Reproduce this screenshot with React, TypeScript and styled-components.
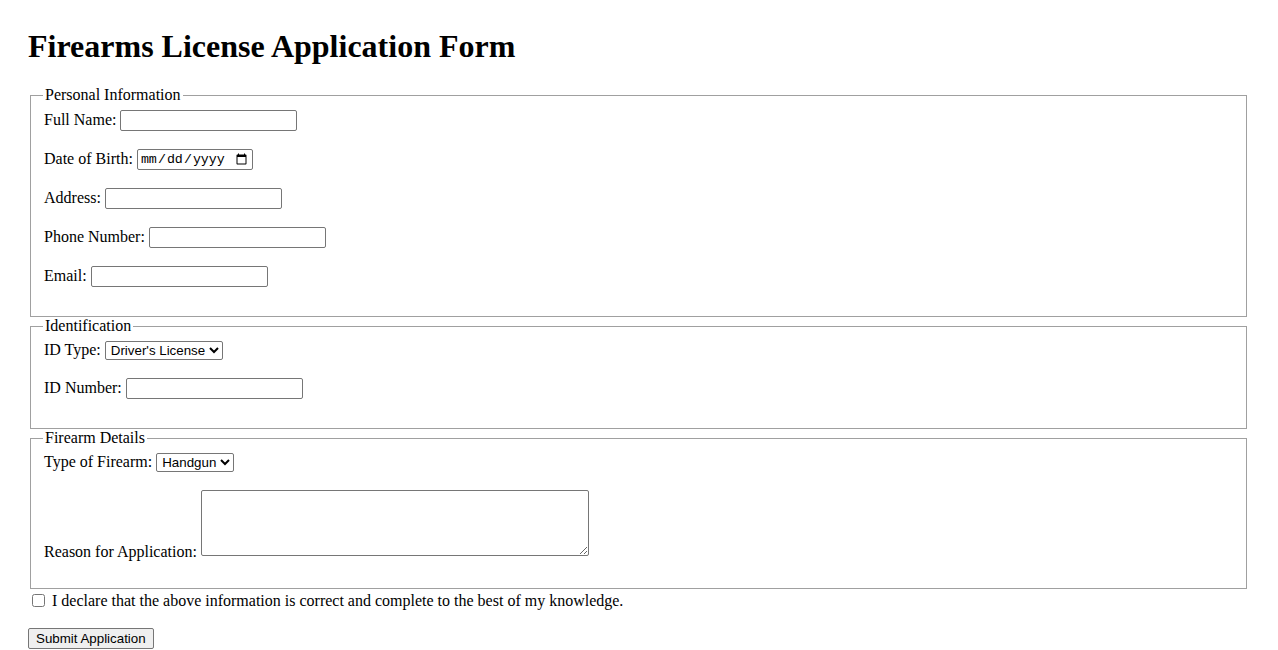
import React from "react";
import styled, { createGlobalStyle } from "styled-components";

const GlobalStyle = createGlobalStyle`
  html {
    overflow: hidden;
  }
  body {
    margin: 0;
    padding: 28px 29px 0 28px;
    background: #ffffff;
    color: #000000;
    font-family: "Liberation Serif", "Times New Roman", serif;
    font-size: 16px;
  }
`;

const Title = styled.h1`
  margin: 0 0 21px;
  font-size: 32px;
  font-weight: bold;
  line-height: 37px;
`;

const Form = styled.form`
  display: block;
`;

const Group = styled.fieldset`
  margin: 0 2px;
  padding: 5px 12px 11px;
  border: 1px solid #a0a0a0;

  &:first-of-type {
    padding-top: 6px;
  }
`;

const Legend = styled.legend`
  padding: 0 2px;
  line-height: 18px;
`;

const Row = styled.div<{ $bottom?: boolean }>`
  display: flex;
  align-items: ${(p) => (p.$bottom ? "flex-end" : "center")};
  gap: 4px;
  min-height: 20px;
  margin: 0 0 18px 1px;
  line-height: 18px;
`;

const FieldLabel = styled.label<{ $shift?: number }>`
  white-space: nowrap;
  padding-bottom: ${(p) => Math.max(p.$shift ?? 2, 0)}px;
  margin-bottom: ${(p) => Math.min(p.$shift ?? 2, 0)}px;
`;

const TextInput = styled.input`
  box-sizing: border-box;
  width: 177px;
  height: 21px;
  padding: 1px 2px;
  border: 1px solid #767676;
  border-radius: 2px;
  font: 13.33px "Liberation Sans", Arial, sans-serif;
`;

const DateInput = styled.input`
  box-sizing: border-box;
  width: 116px;
  height: 21px;
  padding: 1px 2px;
  border: 1px solid #767676;
  border-radius: 2px;
  font: 13.33px "Liberation Mono", "Courier New", monospace;
`;

const Select = styled.select`
  box-sizing: border-box;
  height: 19px;
  padding: 0 0 0 1px;
  border: 1px solid #767676;
  border-radius: 2px;
  background: #ffffff;
  color: #000000;
  font: 13.33px "Liberation Sans", Arial, sans-serif;
`;

const TextArea = styled.textarea`
  box-sizing: border-box;
  width: 388px;
  height: 66px;
  margin: 0 0 3px;
  padding: 2px;
  border: 1px solid #767676;
  border-radius: 2px;
  font: 13.33px "Liberation Mono", "Courier New", monospace;
`;

const Declaration = styled.div`
  display: flex;
  align-items: center;
  min-height: 20px;
  margin: 0 0 17px;
  padding-top: 2px;
  line-height: 18px;
`;

const CheckBox = styled.input`
  width: 13px;
  height: 13px;
  margin: 0 7px 2px 4px;
`;

const SubmitButton = styled.button`
  box-sizing: border-box;
  height: 21px;
  padding: 1px 7px;
  border: 1px solid #767676;
  border-radius: 2px;
  background: #efefef;
  color: #000000;
  font: 13.33px "Liberation Sans", Arial, sans-serif;
`;

export default function App() {
  return (
    <>
      <GlobalStyle />
      <Title>Firearms License Application Form</Title>
      <Form onSubmit={(e) => e.preventDefault()}>
        <Group>
          <Legend>Personal Information</Legend>
          <Row>
            <FieldLabel htmlFor="fullName">Full Name:</FieldLabel>
            <TextInput id="fullName" type="text" />
          </Row>
          <Row>
            <FieldLabel htmlFor="dob">Date of Birth:</FieldLabel>
            <DateInput id="dob" type="date" />
          </Row>
          <Row>
            <FieldLabel htmlFor="address">Address:</FieldLabel>
            <TextInput id="address" type="text" />
          </Row>
          <Row>
            <FieldLabel htmlFor="phone">Phone Number:</FieldLabel>
            <TextInput id="phone" type="tel" />
          </Row>
          <Row>
            <FieldLabel htmlFor="email">Email:</FieldLabel>
            <TextInput id="email" type="email" />
          </Row>
        </Group>
        <Group>
          <Legend>Identification</Legend>
          <Row>
            <FieldLabel htmlFor="idType" $shift={0}>
              ID Type:
            </FieldLabel>
            <Select id="idType" defaultValue="license">
              <option value="license">Driver's License</option>
              <option value="passport">Passport</option>
              <option value="state">State ID</option>
            </Select>
          </Row>
          <Row>
            <FieldLabel htmlFor="idNumber">ID Number:</FieldLabel>
            <TextInput id="idNumber" type="text" />
          </Row>
        </Group>
        <Group>
          <Legend>Firearm Details</Legend>
          <Row>
            <FieldLabel htmlFor="firearmType" $shift={0}>
              Type of Firearm:
            </FieldLabel>
            <Select id="firearmType" defaultValue="handgun">
              <option value="handgun">Handgun</option>
              <option value="rifle">Rifle</option>
              <option value="shotgun">Shotgun</option>
            </Select>
          </Row>
          <Row $bottom>
            <FieldLabel htmlFor="reason" $shift={-2}>
              Reason for Application:
            </FieldLabel>
            <TextArea id="reason" />
          </Row>
        </Group>
        <Declaration>
          <CheckBox id="declare" type="checkbox" />
          <label htmlFor="declare">
            I declare that the above information is correct and complete to
            the best of my knowledge.
          </label>
        </Declaration>
        <SubmitButton type="submit">Submit Application</SubmitButton>
      </Form>
    </>
  );
}
